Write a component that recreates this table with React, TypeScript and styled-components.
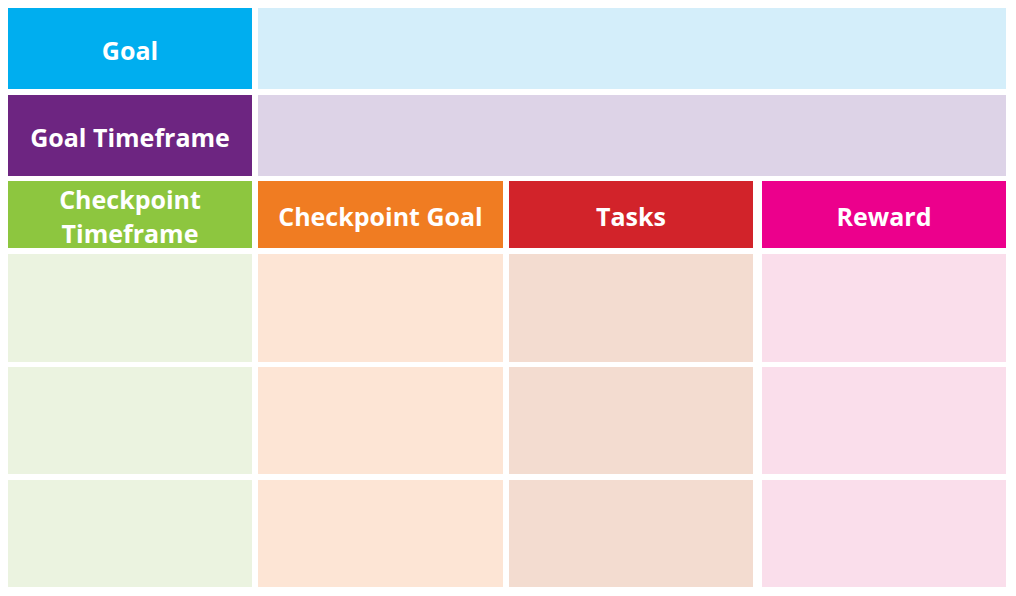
import styled, { createGlobalStyle } from "styled-components";

const GlobalStyle = createGlobalStyle`
  html, body {
    margin: 0;
    background: #ffffff;
    font-family: "Open Sans", "Liberation Sans", sans-serif;
  }
`;

const Sheet = styled.div`
  display: grid;
  grid-template-columns: 244px 245px 244px 247px;
  grid-template-rows: 81px 81px 67px 108px 107px 107px;
  column-gap: 6px;
  row-gap: 5.6px;
  padding: 8px;
  width: 1000px;
`;

const HeadCell = styled.div<{ $bg: string; $shift?: boolean }>`
  display: flex;
  align-items: center;
  justify-content: center;
  text-align: center;
  background: ${(p) => p.$bg};
  color: #ffffff;
  font-weight: 700;
  font-size: 25px;
  line-height: 34px;
  padding-top: 3px;
  margin-left: ${(p) => (p.$shift ? "3px" : "0")};
`;

const FillCell = styled.div<{ $bg: string; $span?: number; $shift?: boolean }>`
  background: ${(p) => p.$bg};
  grid-column: ${(p) => (p.$span ? `span ${p.$span}` : "auto")};
  margin-left: ${(p) => (p.$shift ? "3px" : "0")};
`;

const columns = [
  { title: "Checkpoint Timeframe", head: "#8dc63f", light: "#ebf3e0" },
  { title: "Checkpoint Goal", head: "#f07c22", light: "#fde5d5" },
  { title: "Tasks", head: "#d2232a", light: "#f3dcd0" },
  { title: "Reward", head: "#ec008c", light: "#fadeeb" },
];

const rows = [1, 2, 3];

export default function App() {
  return (
    <>
      <GlobalStyle />
      <Sheet>
        <HeadCell $bg="#00aeef">Goal</HeadCell>
        <FillCell $bg="#d4eefa" $span={3} />
        <HeadCell $bg="#6d2581">Goal Timeframe</HeadCell>
        <FillCell $bg="#ddd3e7" $span={3} />
        {columns.map((col, i) => (
          <HeadCell key={col.title} $bg={col.head} $shift={i === 3}>
            {col.title === "Checkpoint Timeframe" ? (
              <span>
                Checkpoint
                <br />
                Timeframe
              </span>
            ) : (
              col.title
            )}
          </HeadCell>
        ))}
        {rows.map((r) =>
          columns.map((col, i) => <FillCell key={`${r}-${col.title}`} $bg={col.light} $shift={i === 3} />)
        )}
      </Sheet>
    </>
  );
}
